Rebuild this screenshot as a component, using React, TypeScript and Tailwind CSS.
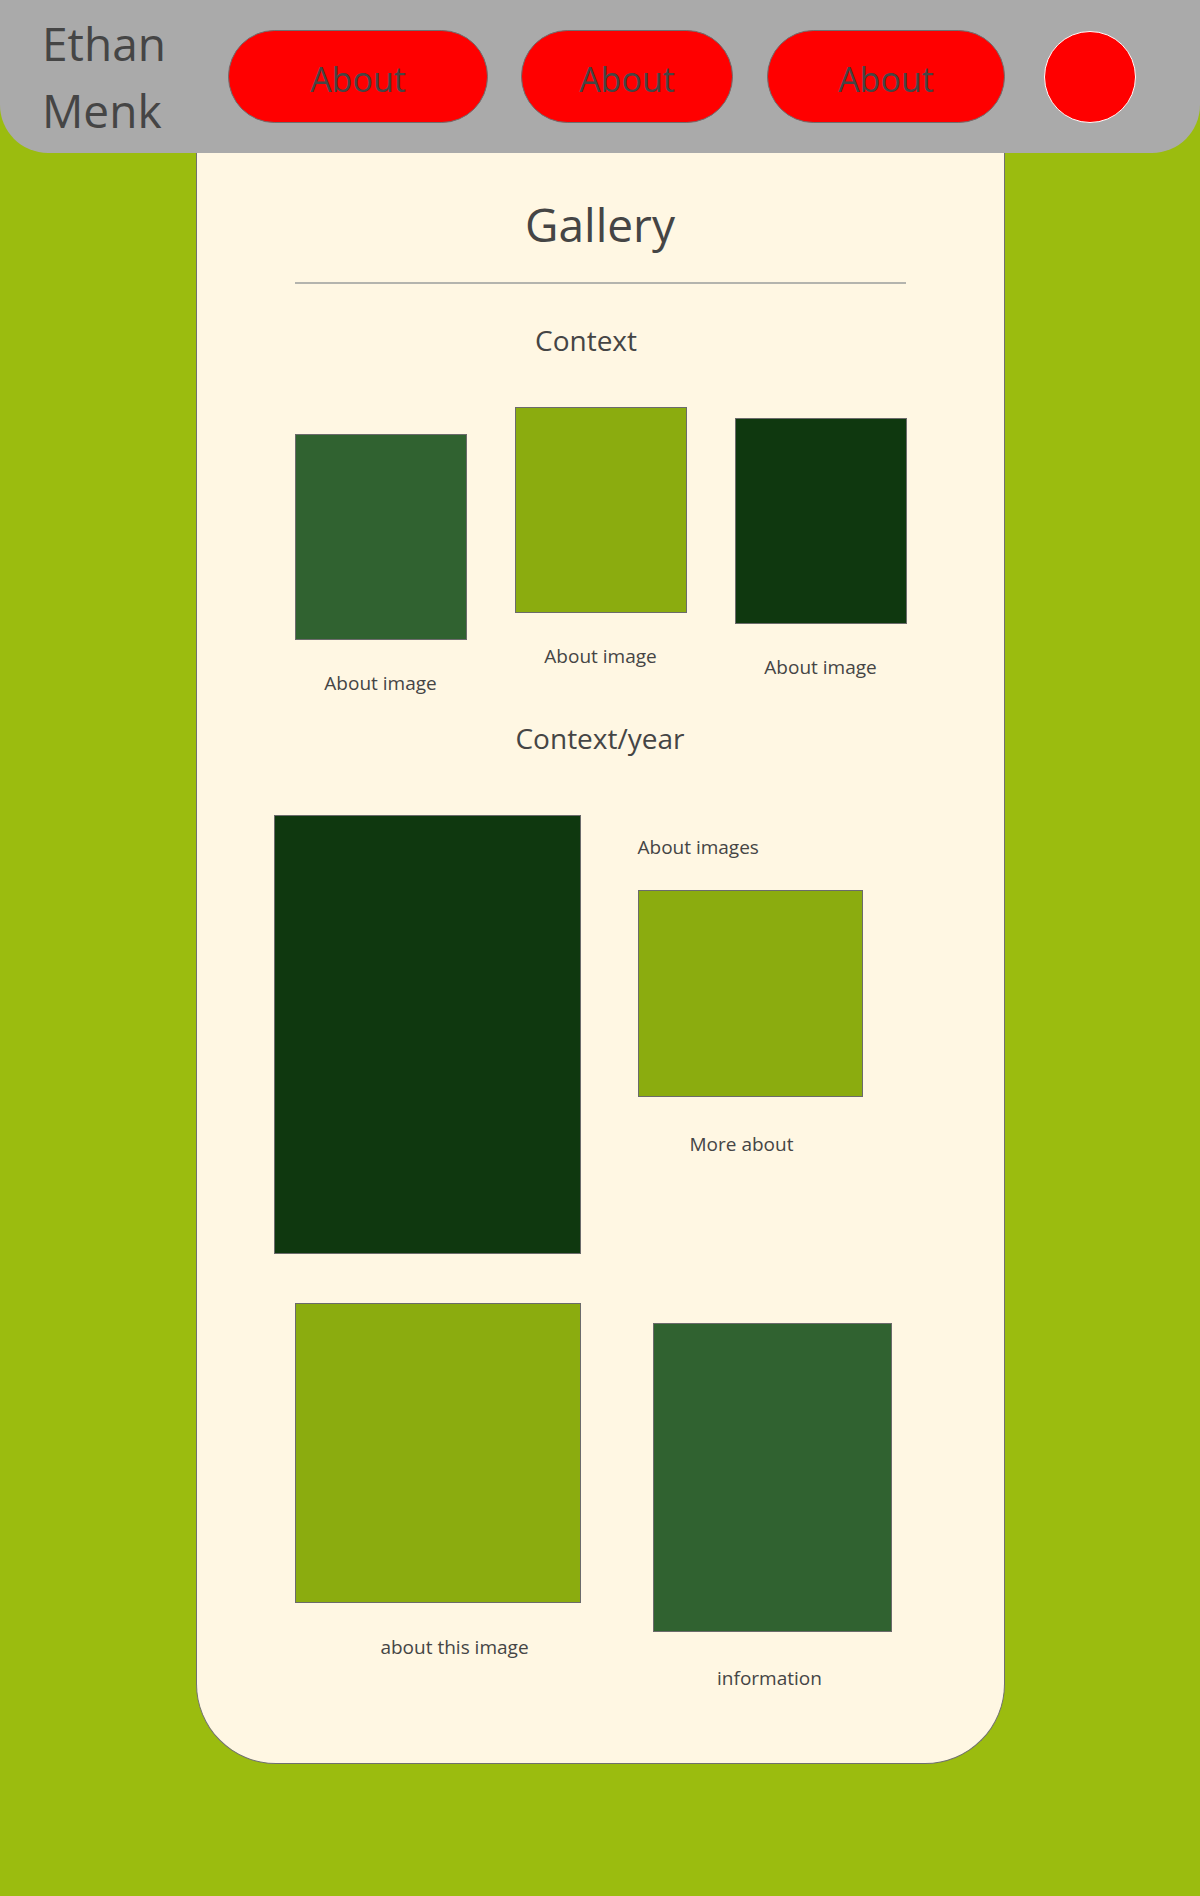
const NavButton = ({ w, ml }: { w: string; ml: string }) => (
  <button className={`${w} ${ml} h-[93px] rounded-full border border-[#6e6e6e] bg-[#ff0000] pt-[5px] text-[34px] text-[#454545]`}>
    About
  </button>
);

const Header = () => (
  <header className="flex h-[153px] w-full items-center rounded-b-[48px] bg-[#aaaaaa]">
    <div className="w-[228px] pl-[42px] text-[46px] leading-[67px] text-[#454545]">
      Ethan
      <br />
      Menk
    </div>
    <NavButton w="w-[260px]" ml="ml-0" />
    <NavButton w="w-[212px]" ml="ml-[33px]" />
    <NavButton w="w-[238px]" ml="ml-[34px]" />
    <div className="ml-[39px] h-[92px] w-[92px] rounded-full border border-white bg-[#ff0000]" />
  </header>
);

export default function App() {
  return (
    <div className="min-h-[1896px] w-full bg-[#9bbc0f] font-['Open_Sans','Noto_Sans',sans-serif] text-[#454545]">
      <Header />

      <main className="mx-auto flex h-[1611px] w-[809px] flex-col rounded-b-[80px] border border-t-0 border-[#707070] bg-[#fff7e3]">
        <h1 className="mt-[40px] text-center text-[46px] leading-[63px]">Gallery</h1>
        <hr className="mx-auto mt-[26px] h-[2px] w-[611px] border-0 bg-[#b4b4ae]" />

        <h2 className="mt-[37px] pr-[28px] text-center text-[28px] leading-[38px]">Context</h2>

        {/* first row of images */}
        <div className="mt-[48px] flex items-start gap-[48px] pl-[98px]">
          <div className="mt-[27px] flex w-[172px] flex-col items-center">
            <div className="h-[206px] w-full border border-[#6b6b6b] bg-[#306230]" />
            <p className="mt-[30px] text-[19px] leading-[26px]">About image</p>
          </div>
          <div className="flex w-[172px] flex-col items-center">
            <div className="h-[206px] w-full border border-[#6b6b6b] bg-[#8bac0f]" />
            <p className="mt-[30px] text-[19px] leading-[26px]">About image</p>
          </div>
          <div className="mt-[11px] flex w-[172px] flex-col items-center">
            <div className="h-[206px] w-full border border-[#6b6b6b] bg-[#0f380f]" />
            <p className="mt-[30px] text-[19px] leading-[26px]">About image</p>
          </div>
        </div>

        <h2 className="mt-[23px] text-center text-[28px] leading-[38px]">Context/year</h2>

        {/* big image with side text */}
        <div className="mt-[58px] flex items-start pl-[77px]">
          <div className="h-[439px] w-[307px] border border-[#6b6b6b] bg-[#0f380f]" />
          <div className="ml-[57px] flex w-[225px] flex-col pt-[19px]">
            <p className="text-[19px] leading-[26px]">About images</p>
            <div className="mt-[30px] h-[207px] w-full border border-[#6b6b6b] bg-[#8bac0f]" />
            <p className="mt-[34px] pr-[17px] text-center text-[19px] leading-[26px]">More about</p>
          </div>
        </div>

        {/* last row */}
        <div className="mt-[49px] flex items-start pl-[98px]">
          <div className="flex w-[286px] flex-col">
            <div className="h-[300px] w-full border border-[#6b6b6b] bg-[#8bac0f]" />
            <p className="mt-[31px] pl-[34px] text-center text-[19px] leading-[26px]">about this image</p>
          </div>
          <div className="ml-[72px] mt-[20px] flex w-[239px] flex-col">
            <div className="h-[309px] w-full border border-[#6b6b6b] bg-[#306230]" />
            <p className="mt-[33px] pr-[5px] text-center text-[19px] leading-[26px]">information</p>
          </div>
        </div>
      </main>
    </div>
  );
}
